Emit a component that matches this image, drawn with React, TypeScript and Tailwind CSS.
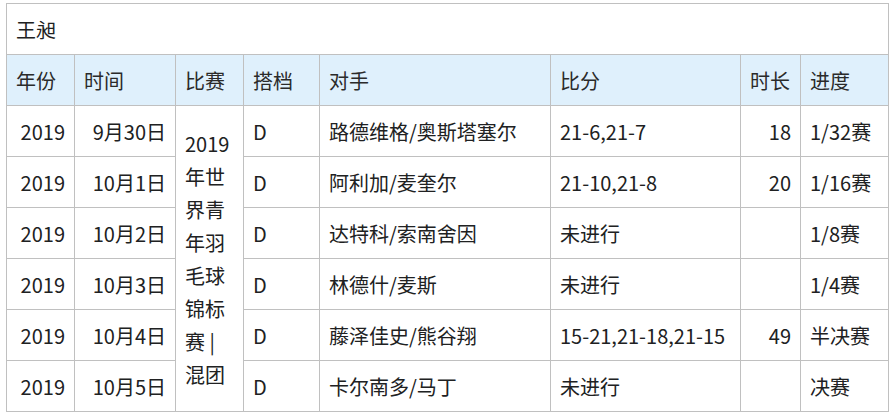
import React from 'react';

const rows = [
  { year: '2019', date: '9月30日', partner: 'D', opp: '路德维格/奥斯塔塞尔', score: '21-6,21-7', dur: '18', stage: '1/32赛' },
  { year: '2019', date: '10月1日', partner: 'D', opp: '阿利加/麦奎尔', score: '21-10,21-8', dur: '20', stage: '1/16赛' },
  { year: '2019', date: '10月2日', partner: 'D', opp: '达特科/索南舍因', score: '未进行', dur: '', stage: '1/8赛' },
  { year: '2019', date: '10月3日', partner: 'D', opp: '林德什/麦斯', score: '未进行', dur: '', stage: '1/4赛' },
  { year: '2019', date: '10月4日', partner: 'D', opp: '藤泽佳史/熊谷翔', score: '15-21,21-18,21-15', dur: '49', stage: '半决赛' },
  { year: '2019', date: '10月5日', partner: 'D', opp: '卡尔南多/马丁', score: '未进行', dur: '', stage: '决赛' },
];

const headers = ['年份', '时间', '比赛', '搭档', '对手', '比分', '时长', '进度'];

export default function App() {
  const cell = 'border border-[#c0c0c0] px-[9px] py-0 h-[51px] leading-[33px]';
  return (
    <div
      className="bg-white pt-[3px] pl-[6px] text-[20px] text-[#202122]"
      style={{ fontFamily: '"Noto Sans CJK SC", "Noto Sans", sans-serif' }}
    >
      <table className="table-fixed border-collapse w-[882px]">
        <colgroup>
          <col className="w-[68px]" />
          <col className="w-[101px]" />
          <col className="w-[68px]" />
          <col className="w-[76px]" />
          <col className="w-[231px]" />
          <col className="w-[190px]" />
          <col className="w-[60px]" />
          <col className="w-[88px]" />
        </colgroup>
        <thead>
          <tr>
            <td colSpan={8} className={`${cell} text-left`}>王昶</td>
          </tr>
          <tr className="bg-[#dff0fc]">
            {headers.map((h) => (
              <th key={h} className={`${cell} h-[50px] text-left font-normal text-[#2a2a2a]`}>
                {h}
              </th>
            ))}
          </tr>
        </thead>
        <tbody>
          {rows.map((r, i) => (
            <tr key={r.date}>
              <td className={`${cell} text-right`}>{r.year}</td>
              <td className={`${cell} text-right`}>{r.date}</td>
              {i === 0 && (
                <td rowSpan={6} className={`${cell} text-left align-middle break-all`}>
                  2019年世界青年羽毛球锦标赛 | 混团
                </td>
              )}
              <td className={`${cell} text-left`}>{r.partner}</td>
              <td className={`${cell} text-left whitespace-nowrap`}>{r.opp}</td>
              <td className={`${cell} text-left whitespace-nowrap`}>{r.score}</td>
              <td className={`${cell} text-right`}>{r.dur}</td>
              <td className={`${cell} text-left whitespace-nowrap`}>{r.stage}</td>
            </tr>
          ))}
        </tbody>
      </table>
    </div>
  );
}
